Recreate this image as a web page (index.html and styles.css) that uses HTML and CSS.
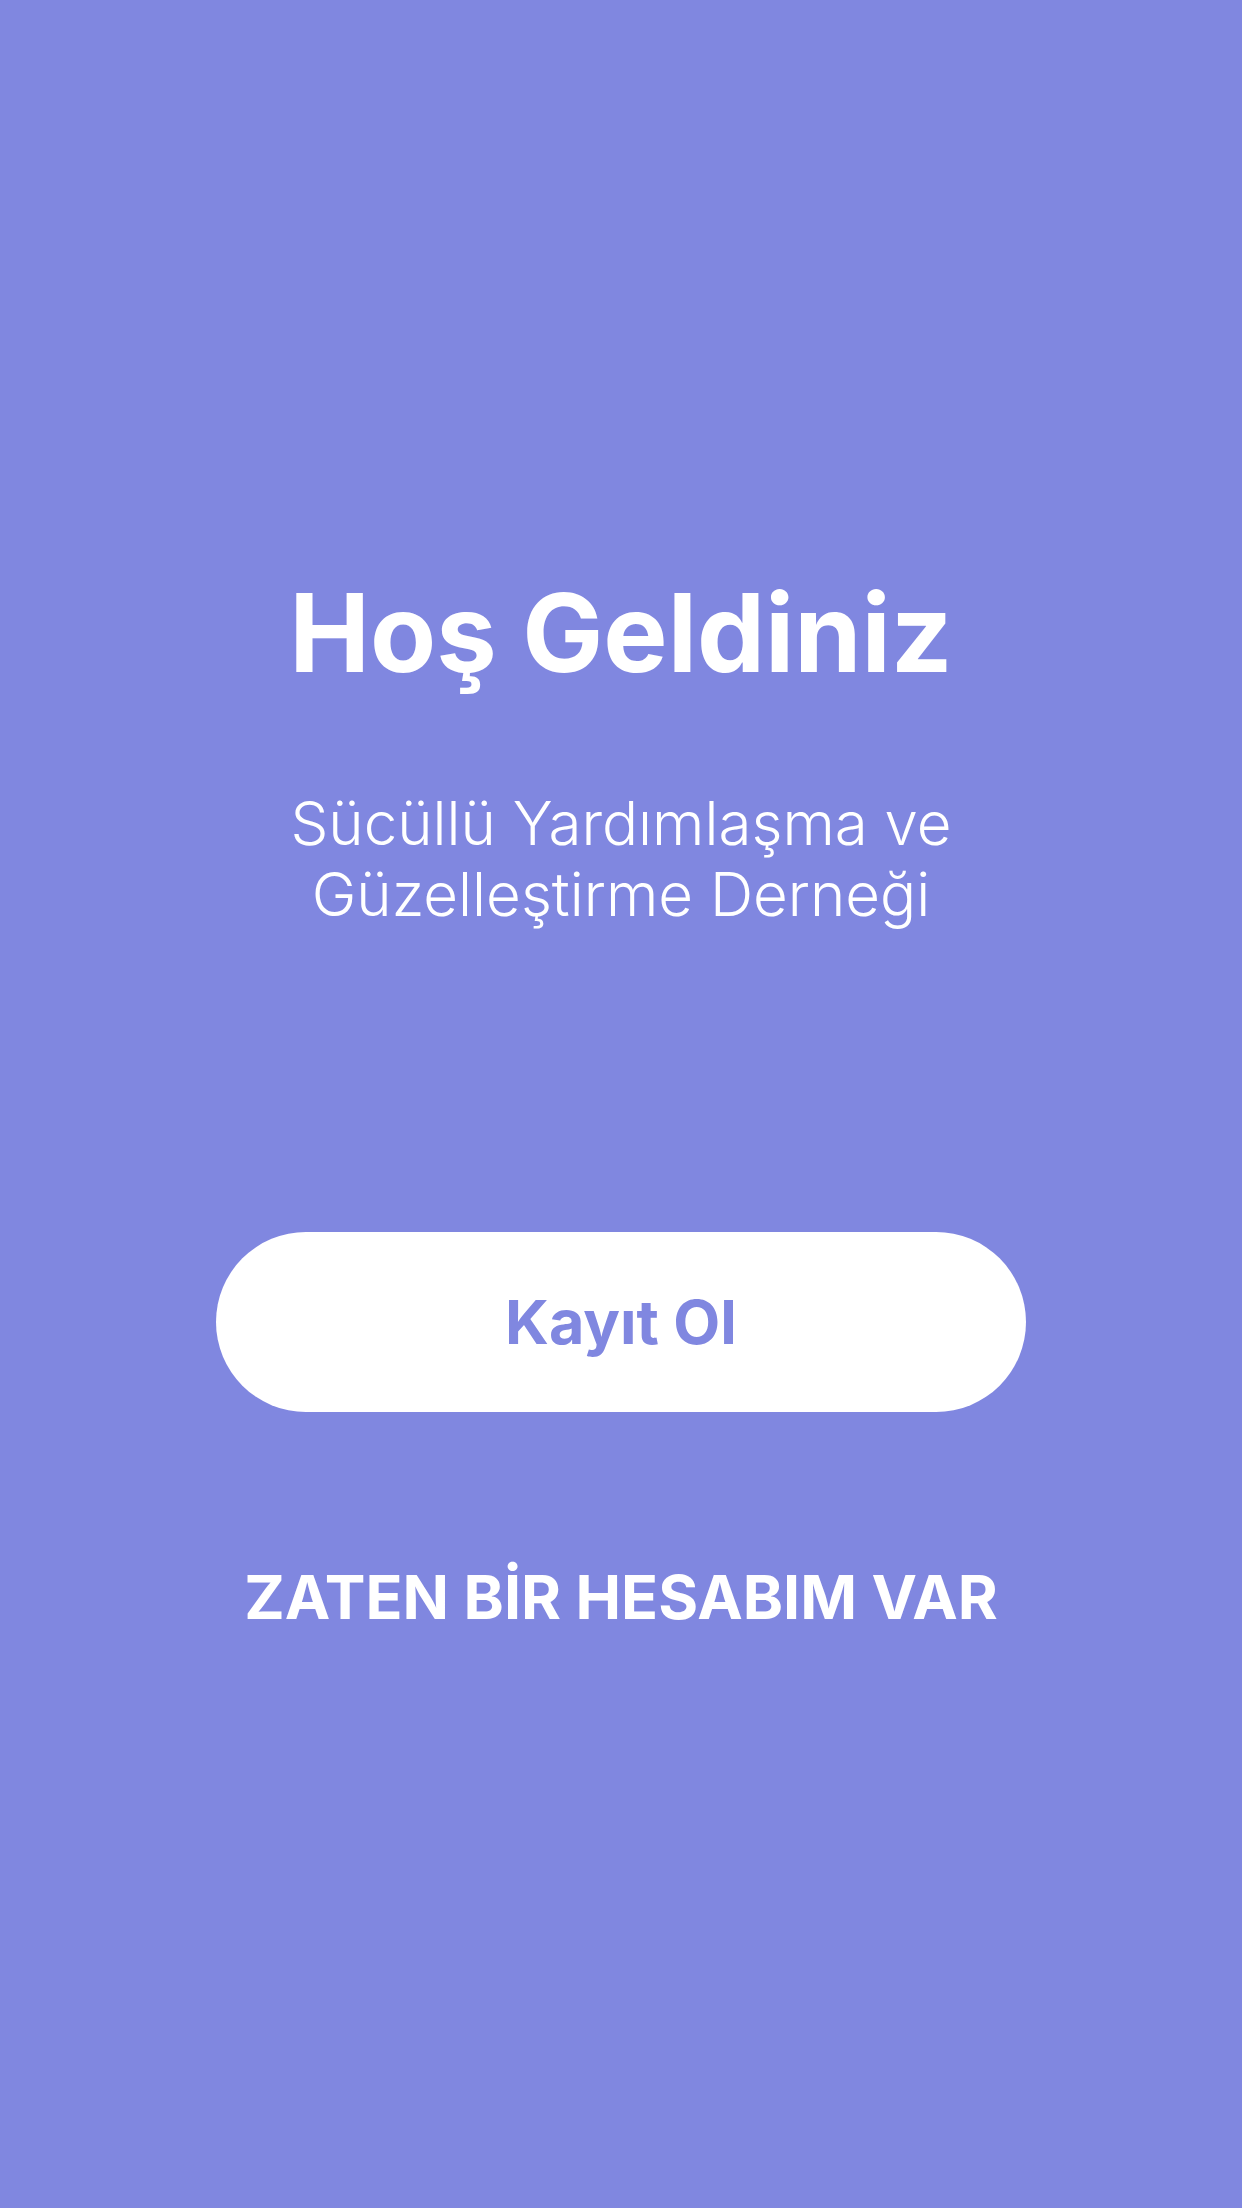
FILE: index.html
```html
<!DOCTYPE html>
<html lang="tr">
<head>
<meta charset="utf-8">
<title>Hoş Geldiniz</title>
<link rel="stylesheet" href="styles.css">
</head>
<body>
<main class="screen">
  <h1 class="title">Hoş Geldiniz</h1>
  <p class="subtitle">Sücüllü Yardımlaşma ve<br>Güzelleştirme Derneği</p>
  <button class="primary-btn" type="button">Kayıt Ol</button>
  <a class="login-link" href="#">ZATEN BİR HESABIM VAR</a>
</main>
</body>
</html>
```
FILE: styles.css
```css
html, body {
  margin: 0;
  padding: 0;
}
body {
  background: #8087e0;
  font-family: Inter, Roboto, "Liberation Sans", sans-serif;
  color: #ffffff;
}
.screen {
  width: 1242px;
  height: 2208px;
  box-sizing: border-box;
  padding-top: 571px;
  display: flex;
  flex-direction: column;
  align-items: center;
}
.title {
  margin: 0;
  font-size: 108px;
  line-height: 124px;
  font-weight: 700;
  text-align: center;
}
.subtitle {
  margin: 93px 0 0;
  font-size: 60px;
  line-height: 71px;
  font-weight: 350;
  text-align: center;
}
.primary-btn {
  margin-top: 302px;
  width: 810px;
  height: 180px;
  border: none;
  border-radius: 90px;
  background: #ffffff;
  color: #8087e0;
  font-family: inherit;
  font-size: 61px;
  line-height: 72px;
  font-weight: 700;
  display: flex;
  align-items: center;
  justify-content: center;
  padding: 0;
}
.login-link {
  margin-top: 149px;
  font-size: 61px;
  line-height: 72px;
  font-weight: 700;
  color: #ffffff;
  text-decoration: none;
}
```
